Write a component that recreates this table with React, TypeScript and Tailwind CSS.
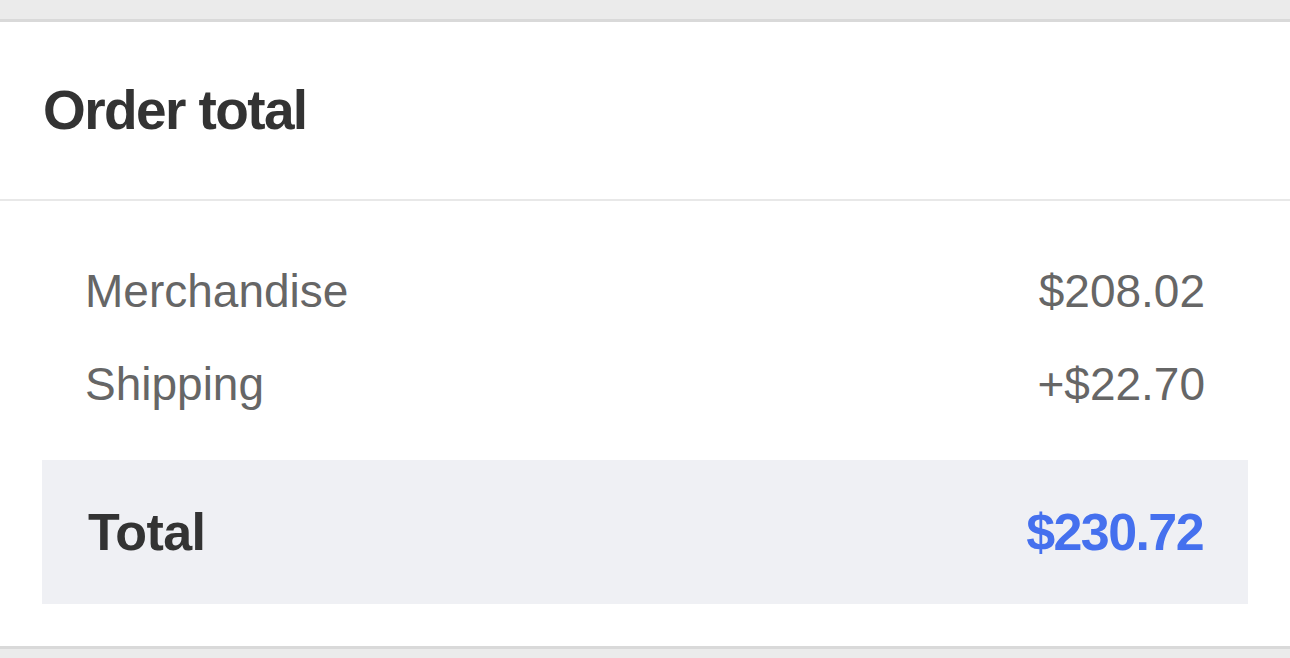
const rows = [
  { label: "Merchandise", value: "$208.02" },
  { label: "Shipping", value: "+$22.70" },
];

export default function App() {
  return (
    <div className="min-h-[658px] bg-[#ebebeb] font-['Liberation_Sans',Arial,sans-serif]">
      <div className="h-[19px]" />
      <section className="bg-white border-y-[3px] border-t-[#d9d9d9] border-b-[#d9d9d9]">
        {/* Header */}
        <div className="h-[179px] flex items-center px-[43px] border-b-2 border-[#e8e8e8]">
          <h2 className="text-[55px] font-bold text-[#333333] tracking-[-1.6px] leading-none">
            Order total
          </h2>
        </div>

        {/* Lines */}
        <div className="pt-[43px] pb-[42px]">
          <div className="px-[85px]">
            {rows.map((r) => (
              <div
                key={r.label}
                className="h-[93px] flex items-center justify-between text-[46px] text-[#666666] leading-none"
              >
                <span>{r.label}</span>
                <span>{r.value}</span>
              </div>
            ))}
          </div>
          <div className="mx-[42px] mt-[30px] h-[144px] bg-[#eff0f4] flex items-center justify-between pl-[46px] pr-[45px]">
            <span className="text-[52px] font-bold text-[#333333] tracking-[-0.6px] leading-none">
              Total
            </span>
            <span className="text-[52px] font-bold text-[#4570ee] tracking-[-1.6px] leading-none">
              $230.72
            </span>
          </div>
        </div>
      </section>
    </div>
  );
}
